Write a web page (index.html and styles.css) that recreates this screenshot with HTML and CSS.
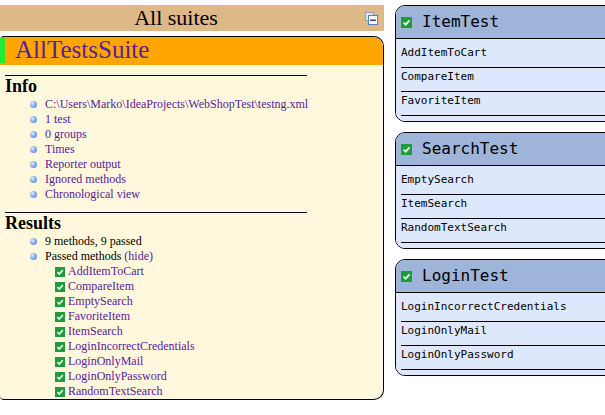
FILE: index.html
```html
<!DOCTYPE html>
<html>
<head>
<meta charset="utf-8">
<title>TestNG reports</title>
<link rel="stylesheet" href="styles.css">
</head>
<body>
<div class="page">
  <div class="navigator">
    <div class="nav-header">
      <span class="nav-title">All suites</span>
      <span class="collapse-icon">
        <svg width="13" height="13" viewBox="0 0 13 13">
          <rect x="0.5" y="0.5" width="8" height="8" fill="#dfe6f1" stroke="#8ea3c4"/>
          <rect x="3.5" y="3.5" width="9" height="9" fill="#ffffff" stroke="#5b7fb8"/>
          <rect x="5" y="7.5" width="6" height="1.6" fill="#1f4f9e"/>
        </svg>
      </span>
    </div>
    <div class="suite">
      <div class="suite-header"><span class="suite-name">AllTestsSuite</span></div>
      <div class="suite-content">
        <div class="section-title">Info</div>
        <ul class="section-list">
          <li><a class="link">C:\Users\Marko\IdeaProjects\WebShopTest\testng.xml</a></li>
          <li><a class="link">1 test</a></li>
          <li><a class="link">0 groups</a></li>
          <li><a class="link">Times</a></li>
          <li><a class="link">Reporter output</a></li>
          <li><a class="link">Ignored methods</a></li>
          <li><a class="link">Chronological view</a></li>
        </ul>
        <div class="section-title">Results</div>
        <ul class="section-list">
          <li>9 methods, 9 passed</li>
          <li>Passed methods <a class="link">(hide)</a>
            <div class="method-list">
              <div class="method-item"><svg class="check" width="10" height="10" viewBox="0 0 10 10"><rect width="10" height="10" fill="#1f9a3c"/><path d="M2.4 5.1 L4.3 7 L7.8 3.1" stroke="#e8f8ea" stroke-width="1.7" fill="none"/></svg><a class="link">AddItemToCart</a></div>
              <div class="method-item"><svg class="check" width="10" height="10" viewBox="0 0 10 10"><rect width="10" height="10" fill="#1f9a3c"/><path d="M2.4 5.1 L4.3 7 L7.8 3.1" stroke="#e8f8ea" stroke-width="1.7" fill="none"/></svg><a class="link">CompareItem</a></div>
              <div class="method-item"><svg class="check" width="10" height="10" viewBox="0 0 10 10"><rect width="10" height="10" fill="#1f9a3c"/><path d="M2.4 5.1 L4.3 7 L7.8 3.1" stroke="#e8f8ea" stroke-width="1.7" fill="none"/></svg><a class="link">EmptySearch</a></div>
              <div class="method-item"><svg class="check" width="10" height="10" viewBox="0 0 10 10"><rect width="10" height="10" fill="#1f9a3c"/><path d="M2.4 5.1 L4.3 7 L7.8 3.1" stroke="#e8f8ea" stroke-width="1.7" fill="none"/></svg><a class="link">FavoriteItem</a></div>
              <div class="method-item"><svg class="check" width="10" height="10" viewBox="0 0 10 10"><rect width="10" height="10" fill="#1f9a3c"/><path d="M2.4 5.1 L4.3 7 L7.8 3.1" stroke="#e8f8ea" stroke-width="1.7" fill="none"/></svg><a class="link">ItemSearch</a></div>
              <div class="method-item"><svg class="check" width="10" height="10" viewBox="0 0 10 10"><rect width="10" height="10" fill="#1f9a3c"/><path d="M2.4 5.1 L4.3 7 L7.8 3.1" stroke="#e8f8ea" stroke-width="1.7" fill="none"/></svg><a class="link">LoginIncorrectCredentials</a></div>
              <div class="method-item"><svg class="check" width="10" height="10" viewBox="0 0 10 10"><rect width="10" height="10" fill="#1f9a3c"/><path d="M2.4 5.1 L4.3 7 L7.8 3.1" stroke="#e8f8ea" stroke-width="1.7" fill="none"/></svg><a class="link">LoginOnlyMail</a></div>
              <div class="method-item"><svg class="check" width="10" height="10" viewBox="0 0 10 10"><rect width="10" height="10" fill="#1f9a3c"/><path d="M2.4 5.1 L4.3 7 L7.8 3.1" stroke="#e8f8ea" stroke-width="1.7" fill="none"/></svg><a class="link">LoginOnlyPassword</a></div>
              <div class="method-item"><svg class="check" width="10" height="10" viewBox="0 0 10 10"><rect width="10" height="10" fill="#1f9a3c"/><path d="M2.4 5.1 L4.3 7 L7.8 3.1" stroke="#e8f8ea" stroke-width="1.7" fill="none"/></svg><a class="link">RandomTextSearch</a></div>
            </div>
          </li>
        </ul>
      </div>
    </div>
  </div>

  <div class="main">
    <div class="panel">
      <div class="panel-header"><svg class="hcheck" width="11" height="11" viewBox="0 0 11 11"><rect width="11" height="11" fill="#1f9a3c"/><path d="M2.6 5.6 L4.7 7.7 L8.5 3.4" stroke="#e8f8ea" stroke-width="1.8" fill="none"/></svg><span class="class-name">ItemTest</span></div>
      <div class="panel-content">
        <div class="method">AddItemToCart</div>
        <div class="method">CompareItem</div>
        <div class="method">FavoriteItem</div>
      </div>
    </div>
    <div class="panel">
      <div class="panel-header"><svg class="hcheck" width="11" height="11" viewBox="0 0 11 11"><rect width="11" height="11" fill="#1f9a3c"/><path d="M2.6 5.6 L4.7 7.7 L8.5 3.4" stroke="#e8f8ea" stroke-width="1.8" fill="none"/></svg><span class="class-name">SearchTest</span></div>
      <div class="panel-content">
        <div class="method">EmptySearch</div>
        <div class="method">ItemSearch</div>
        <div class="method">RandomTextSearch</div>
      </div>
    </div>
    <div class="panel">
      <div class="panel-header"><svg class="hcheck" width="11" height="11" viewBox="0 0 11 11"><rect width="11" height="11" fill="#1f9a3c"/><path d="M2.6 5.6 L4.7 7.7 L8.5 3.4" stroke="#e8f8ea" stroke-width="1.8" fill="none"/></svg><span class="class-name">LoginTest</span></div>
      <div class="panel-content">
        <div class="method">LoginIncorrectCredentials</div>
        <div class="method">LoginOnlyMail</div>
        <div class="method">LoginOnlyPassword</div>
      </div>
    </div>
  </div>
</div>
</body>
</html>
```

FILE: styles.css
```css
html, body {
  margin: 0;
  padding: 0;
  background: #ffffff;
  overflow: hidden;
}

.page {
  display: grid;
  grid-template-columns: 384px 1fr;
  column-gap: 11px;
  padding-top: 5px;
  width: 605px;
  height: 410px;
  overflow: hidden;
  font-family: "Liberation Serif", "Times New Roman", serif;
}

/* navigator */
.nav-header {
  display: flex;
  align-items: center;
  height: 26px;
  background: #deb887;
  margin-bottom: 5px;
}

.nav-title {
  flex: 0 0 352px;
  text-align: center;
  font-size: 22px;
  line-height: 26px;
  color: #000;
}

.collapse-icon {
  display: flex;
  padding: 0 5px 0 13px;
}

.suite {
  background: #fff8dc;
  border: 1px solid #000;
  border-left: 0;
  border-radius: 4px 10px 10px 4px;
  overflow: hidden;
}

.suite-header {
  background: #ffa500;
  height: 28px;
  border-top-right-radius: 9px;
}

.suite-name {
  display: inline-block;
  border-left: 5px solid #22ec2e;
  padding-left: 10px;
  font-size: 25px;
  line-height: 26px;
  color: #58219a;
}

.suite-content {
  padding-left: 5px;
  font-size: 12px;
  color: #000;
}

.section-title {
  margin-top: 10px;
  width: 80%;
  border-top: 1px solid #000;
  font-size: 18px;
  line-height: 21px;
  font-weight: bold;
}

.section-list {
  margin: 0;
  padding-left: 40px;
  list-style: none;
}

.section-list > li {
  line-height: 15px;
}

.section-list > li::before {
  content: "";
  display: inline-block;
  width: 7px;
  height: 7px;
  border-radius: 50%;
  margin-left: -15px;
  margin-right: 8px;
  vertical-align: 0px;
  background: radial-gradient(circle at 35% 35%, #e4eeff 0, #86aef4 45%, #4a7ee0 100%);
}

.link {
  color: #58219a;
  text-decoration: none;
}

.method-list {
  margin-left: 10px;
}

.method-item {
  display: flex;
  align-items: center;
  height: 15px;
  gap: 3px;
}

.check {
  flex: none;
}

/* main panels */
.main {
  overflow: hidden;
}

.panel {
  width: 260px;
  margin-bottom: 10px;
  border: 1px solid #000;
  border-radius: 10px;
  overflow: hidden;
  font-family: "DejaVu Sans Mono", "Liberation Mono", monospace;
}

.panel-header {
  display: flex;
  align-items: center;
  padding: 5px;
  height: 22px;
  background: #9fb4d9;
  border-bottom: 1px solid #000;
}

.hcheck {
  flex: none;
}

.class-name {
  margin-left: 10px;
  font-size: 16px;
  line-height: 22px;
  color: #000;
}

.panel-content {
  padding: 5px;
  background: #dee8fc;
}

.method {
  border-bottom: 1px solid #000;
  padding-bottom: 5px;
  font-size: 11px;
  line-height: 18px;
  color: #000;
}
```
